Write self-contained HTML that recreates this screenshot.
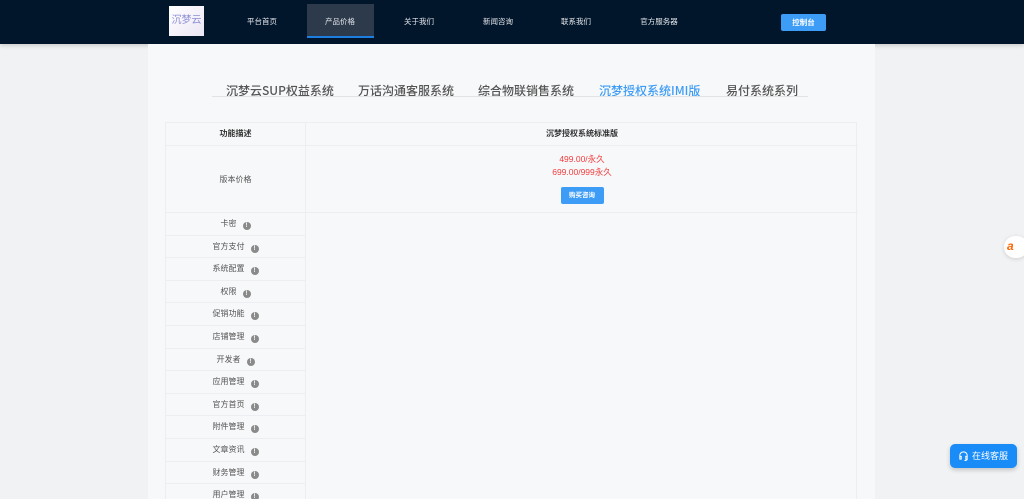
<!DOCTYPE html><html><head><meta charset="utf-8"><style>
*{margin:0;padding:0;box-sizing:border-box}
html,body{width:1024px;height:499px;overflow:hidden}
body{background:#f1f2f4;font-family:"Liberation Sans","Noto Sans CJK SC",sans-serif;position:relative}
.nav{position:absolute;left:0;top:0;width:1024px;height:44px;background:#01152b;box-shadow:0 2px 4px rgba(0,0,0,.15)}
.logo{position:absolute;left:169px;top:6px;width:35px;height:30px;background:linear-gradient(135deg,#fff,#ece6f5);color:#8a8ed6;font-size:10px;line-height:30px;text-align:center}
.ni{position:absolute;top:0;height:44px;line-height:43px;color:#e6e8ec;font-size:7.5px;transform:translateX(-50%)}
.act{position:absolute;left:307px;top:4px;width:67px;height:34px;background:#2d3a4b;border-bottom:2px solid #1e7ee0}
.btn{position:absolute;left:781px;top:14px;width:45px;height:17px;background:#3d9cf5;border-radius:2px;color:#fff;font-size:7.5px;line-height:17px;text-align:center;font-weight:bold}
.wrap{position:absolute;left:148px;top:44px;width:727px;height:455px;background:#f7f8fa}
.tabs{position:absolute;top:82px;left:0;width:1024px;font-size:12px;color:#555;font-family:"Noto Sans CJK SC",sans-serif;font-weight:500}
.tabs span{position:absolute;white-space:nowrap;line-height:17px}
.tl{position:absolute;left:212px;top:96px;width:596px;height:1px;background:#e2e3e6}
.tb{position:absolute;left:165px;top:122px;width:692px;height:377px;border:1px solid #eceef1;border-bottom:none}
.c{position:absolute;font-size:8px;color:#555;text-align:center}
.h{border-bottom:1px solid #eceef1}
.q{display:inline-block;width:8px;height:8px;border-radius:50%;background:#8a8a8a;color:#fff;font-size:6px;line-height:8px;text-align:center;margin-left:6px;vertical-align:-1px;font-weight:bold}
</style></head><body>
<div class="nav">
<div class="logo">沉梦云</div>
<div class="act"></div>
<div class="ni" style="left:262px">平台首页</div>
<div class="ni" style="left:340px">产品价格</div>
<div class="ni" style="left:419px">关于我们</div>
<div class="ni" style="left:498px">新闻咨询</div>
<div class="ni" style="left:576px">联系我们</div>
<div class="ni" style="left:659px">官方服务器</div>
<div class="btn">控制台</div>
</div>
<div class="wrap"></div>
<div class="tabs">
<span style="left:226px">沉梦云SUP权益系统</span>
<span style="left:358px">万话沟通客服系统</span>
<span style="left:478px">综合物联销售系统</span>
<span style="left:599px;color:#3d9cf5;text-decoration:underline">沉梦授权系统IMI版</span>
<span style="left:726px">易付系统系列</span>
</div>
<div class="tl"></div>
<div class="tb">
<div style="position:absolute;left:139px;top:0;width:1px;height:377px;background:#eceef1"></div>
<div class="c h" style="left:0;top:0;width:139px;height:23px;line-height:22px;font-weight:bold;color:#333">功能描述</div>
<div class="c h" style="left:140px;top:0;width:552px;height:23px;line-height:22px;font-weight:bold;color:#333">沉梦授权系统标准版</div>
<div class="c h" style="left:0;top:23px;width:139px;height:67px;line-height:67px">版本价格</div>
<div class="c h" style="left:140px;top:23px;width:552px;height:67px;color:#f23b3b;font-size:8.5px;line-height:13px;padding-top:7px">499.00/永久<br>699.00/999永久
<div style="margin:8px auto 0;width:43px;height:17px;background:#3d9cf5;border-radius:2px;color:#fff;font-size:6.5px;line-height:17px;font-weight:bold">购买咨询</div></div>
</div>
<div id="rows"></div>
<div style="position:absolute;left:1004px;top:236px;width:24px;height:22px;border-radius:11px;background:#fff;box-shadow:0 1px 4px rgba(0,0,0,.15);color:#f60;font-size:12px;line-height:20px;padding-left:3px;font-style:italic;font-weight:bold">a</div>
<div style="position:absolute;left:950px;top:444px;width:67px;height:24px;border-radius:5px;background:#1a8cf8;color:#fff;font-size:9px;line-height:24px;padding-left:8px;box-shadow:0 2px 5px rgba(0,0,0,.2)"><svg width="11" height="11" viewBox="0 0 12 12" style="vertical-align:-2px;margin-right:3px"><path d="M2 7V6a4 4 0 0 1 8 0v1M2 7h1.5v3H2zM10 7H8.5v3H10zM10 10q0 1.5-3 1.5" fill="none" stroke="#fff" stroke-width="1.1"/></svg>在线客服</div>
<script>
var n=["卡密","官方支付","系统配置","权限","促销功能","店铺管理","开发者","应用管理","官方首页","附件管理","文章资讯","财务管理","用户管理"],h="";
for(var i=0;i<n.length;i++){h+='<div class="c" style="left:166px;top:'+(213+i*22.6)+'px;width:139px;height:22.6px;line-height:22px;border-bottom:1px solid #eceef1">'+n[i]+'<span class="q">!</span></div>';}
document.getElementById("rows").innerHTML=h;
</script>
</body></html>
